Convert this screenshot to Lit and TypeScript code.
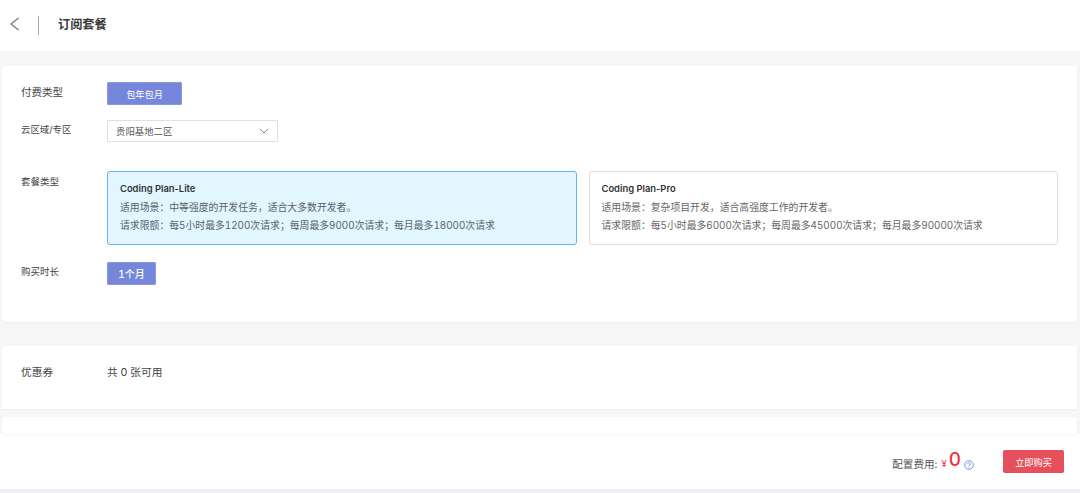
import { LitElement, html, css } from "lit";
import { customElement } from "lit/decorators.js";

const plans = [
  { name: "Coding Plan-Lite", scene: "适用场景：中等强度的开发任务，适合大多数开发者。", quota: "请求限额：每5小时最多1200次请求；每周最多9000次请求；每月最多18000次请求", on: true },
  { name: "Coding Plan-Pro", scene: "适用场景：复杂项目开发，适合高强度工作的开发者。", quota: "请求限额：每5小时最多6000次请求；每周最多45000次请求；每月最多90000次请求", on: false },
];

@customElement("app-root")
export class AppRoot extends LitElement {
  static styles = css`
    :host { display: block; width: 1080px; height: 493px; overflow: hidden; background: #f6f6f6; font-family: "Inter", "Noto Sans CJK SC", sans-serif; color: #333; font-variant-numeric: tabular-nums; }
    .header { height: 51px; background: #fff; display: flex; align-items: center; padding: 0 0 1px 9px; box-sizing: border-box; }
    .back { width: 12px; height: 16px; display: block; margin-bottom: 2px; }
    .vr { width: 1px; height: 19px; background: #a8a8a8; margin-left: 17px; }
    .title { margin-left: 19px; font-size: 12.2px; font-weight: 700; color: #3a3a3a; line-height: 16px; }
    .main { padding: 15px 3px 0 2px; display: flex; flex-direction: column; }
    .card { background: #fff; border-radius: 2px; box-shadow: 0 1px 2px rgba(0,0,0,.04); }
    .config { height: 256px; box-sizing: border-box; padding: 16px 19px 0 19px; display: flex; flex-direction: column; }
    .row { display: flex; }
    .label { width: 86px; flex: none; font-size: 10.5px; color: #444; line-height: 22px; }
    .btn { height: 23px; box-sizing: border-box; border-radius: 1px; background: #7586db; color: #fff; font-size: 9.2px; display: flex; align-items: center; justify-content: center; border: 1px solid #8a99e2; }
    .b-year { width: 75px; }
    .b-month { width: 49px; font-size: 10px; font-weight: 500; }
    .region { margin-top: 15px; }
    .region .label { font-size: 9.4px; line-height: 20px; }
    .select { width: 171px; height: 22px; box-sizing: border-box; border: 1px solid #e0e0e0; border-radius: 1px; display: flex; align-items: center; justify-content: space-between; padding: 0 8px; font-size: 9.4px; color: #555; }
    .chev { width: 10px; height: 6px; display: block; }
    .types { margin-top: 29px; }
    .types .label { font-size: 9.5px; line-height: 22px; }
    .plans { display: flex; gap: 12px; flex: 1; }
    .plan { flex: 1; height: 74px; box-sizing: border-box; border: 1px solid #dedede; border-radius: 3px; padding: 10px 12px 0 12px; font-size: 9.85px; color: #666; background: #fff; line-height: 18px; white-space: nowrap; }
    .plan.on { background: #e1f6ff; border-color: #63b2f7; color: #5a6268; }
    .plan-name { font-weight: 600; color: #333; font-size: 9.4px; line-height: 14px; margin-bottom: 2px; font-variant-numeric: normal; }
    .duration { margin-top: 17px; }
    .duration .label { font-size: 9.5px; line-height: 20px; }
    .coupon { margin-top: 24px; height: 63px; box-sizing: border-box; padding: 18px 19px 0; display: flex; }
    .coupon .label { font-size: 10.7px; line-height: 18px; }
    .coupon .val { font-size: 10.7px; line-height: 18px; color: #444; }
    .stub { margin-top: 8px; height: 17px; }
    .footer { height: 55px; background: #fff; display: flex; align-items: center; justify-content: flex-end; padding-right: 16px; box-sizing: border-box; }
    .fee { font-size: 10.6px; color: #555; margin-top: 4px; }
    .yen { font-size: 9.5px; color: #f2303d; margin-left: 4px; margin-top: 4px; }
    .amt { font-size: 19px; font-weight: 500; color: #f2303d; margin-left: 2px; line-height: 22px; margin-top: -3px; }
    .help { width: 10px; height: 10px; display: block; margin-left: 3px; margin-top: 6px; }
    .buy { width: 61px; height: 23px; margin-left: 29px; background: #e6505c; color: #fff; font-size: 9.2px; border-radius: 2px; display: flex; align-items: center; justify-content: center; }
    .rest { height: 4px; background: #f0f0f4; }
  `;

  render() {
    return html`
      <div class="header">
        <svg class="back" viewBox="0 0 12 16" fill="none" stroke="#777" stroke-width="1.2"><path d="M9.5 2 L2 8 L9.5 14"/></svg>
        <div class="vr"></div>
        <div class="title">订阅套餐</div>
      </div>
      <div class="main">
        <div class="card config">
          <div class="row">
            <div class="label">付费类型</div>
            <div class="btn b-year">包年包月</div>
          </div>
          <div class="row region">
            <div class="label">云区域/专区</div>
            <div class="select">
              <span>贵阳基地二区</span>
              <svg class="chev" viewBox="0 0 10 6" fill="none" stroke="#888" stroke-width="1"><path d="M1 .8 L5 5 L9 .8"/></svg>
            </div>
          </div>
          <div class="row types">
            <div class="label">套餐类型</div>
            <div class="plans">
              ${plans.map(p => html`
                <div class="plan ${p.on ? "on" : ""}">
                  <div class="plan-name">${p.name}</div>
                  <div>${p.scene}</div>
                  <div>${p.quota}</div>
                </div>`)}
            </div>
          </div>
          <div class="row duration">
            <div class="label">购买时长</div>
            <div class="btn b-month">1个月</div>
          </div>
        </div>
        <div class="card coupon">
          <div class="label">优惠券</div>
          <div class="val">共 0 张可用</div>
        </div>
        <div class="card stub"></div>
      </div>
      <div class="footer">
        <span class="fee">配置费用:</span>
        <span class="yen">¥</span>
        <span class="amt">0</span>
        <svg class="help" viewBox="0 0 10 10" fill="none" stroke="#6d8fe0" stroke-width=".9"><circle cx="5" cy="5" r="4.3"/><path d="M3.6 4 C3.6 2.2 6.4 2.2 6.4 3.9 C6.4 5 5 5 5 6.2"/><path d="M5 7 V7.9"/></svg>
        <div class="buy">立即购买</div>
      </div>
      <div class="rest"></div>
    `;
  }
}
